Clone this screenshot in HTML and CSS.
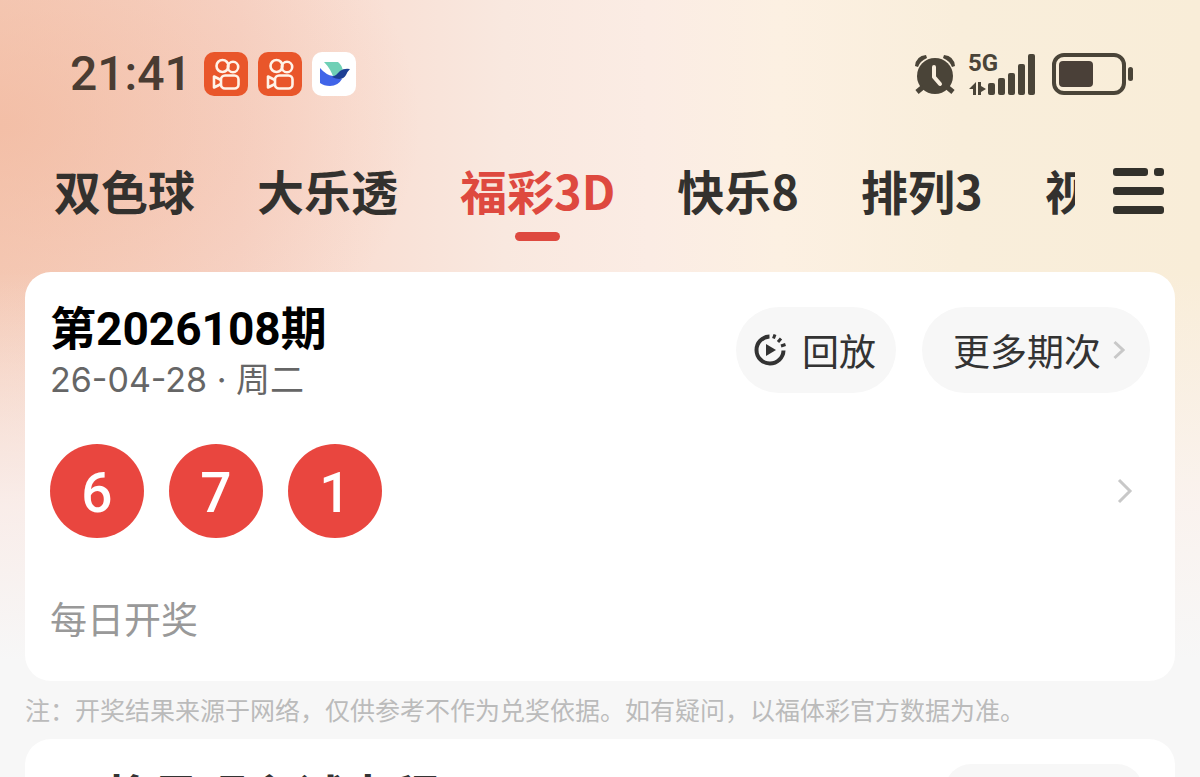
FILE: index.html
```
<!DOCTYPE html>
<html lang="zh-CN">
<head>
    <meta charset="UTF-8">
    <meta name="viewport" content="width=device-width, initial-scale=1.0">
    <title>福彩3D开奖</title>
    <link rel="stylesheet" href="styles.css">
</head>
<body>

    <svg class="defs" width="0" height="0" aria-hidden="true">
        <symbol id="camera" viewBox="0 0 44 44">
            <rect width="44" height="44" rx="10" fill="#e9562a"/>
            <g fill="none" stroke="#fff3e8" stroke-width="2.6" stroke-linejoin="round">
                <circle cx="18.500" cy="14" r="6"/>
                <circle cx="29" cy="15" r="5.200"/>
                <rect x="17" y="23.500" width="17.500" height="13" rx="4"/>
                <path d="M17 28l-7-3.500v11l7-3.500"/>
            </g>
        </symbol>
    </svg>

    <header class="status-bar">
        <span class="time">21:41</span>
        <svg class="app-icon" viewBox="0 0 44 44"><use href="#camera"/></svg>
        <svg class="app-icon" viewBox="0 0 44 44"><use href="#camera"/></svg>
        <svg class="app-icon" viewBox="0 0 44 44">
            <rect width="44" height="44" rx="10" fill="#fff"/>
            <path d="M12 10h14q4 3 5 9-4 1-9 8Q19 17 12 10z" fill="#6fd0b6"/>
            <path d="M8 16q6 7 13 8l9 3q-4 7-12 7-6 0-10-3z" fill="#4064e8"/>
            <path d="M20 25q5-2 8-6 4-3 10-2-3 3-4 6-4 7-14 2z" fill="#1d3f94"/>
        </svg>

        <div class="status-right">
            <svg class="alarm" viewBox="0 0 42 42" fill="#4a4438">
                <path d="M1 13Q2 3 12 2l1 3Q6 8 4 14zM41 13Q40 3 30 2l-1 3q7 3 9 9z"/>
                <circle cx="21" cy="23" r="18"/>
                <path d="M9 34l-6 5M33 34l6 5" stroke="#4a4438" stroke-width="5"/>
                <path d="M20 14v10l6 7" fill="none" stroke="#f9eedd" stroke-width="4" stroke-linecap="round" stroke-linejoin="round"/>
            </svg>
            <div class="signal">
                <span class="network">5G</span>
                <svg class="bars" viewBox="0 0 68 42" fill="#4a4438">
                    <rect x="20" y="30" width="7" height="12" rx="2"/>
                    <rect x="30" y="25" width="7" height="17" rx="2"/>
                    <rect x="40" y="20" width="7" height="22" rx="2"/>
                    <rect x="50" y="11" width="7" height="31" rx="2"/>
                    <rect x="60" y="1" width="7" height="41" rx="2"/>
                    <path d="M8 29v13H5v-6H1zM10 29h3v4l5 3-5 3v3h-3z"/>
                </svg>
            </div>
            <svg class="battery" viewBox="0 0 82 42">
                <rect x="2" y="2" width="70" height="38" rx="10" fill="none" stroke="#4a4438" stroke-width="4"/>
                <rect x="7" y="8" width="34" height="26" rx="4" fill="#4a4038"/>
                <rect x="76" y="14" width="5" height="14" rx="2.500" fill="#4a4438"/>
            </svg>
        </div>
    </header>

    <nav class="nav">
        <div class="tabs">
            <a href="#" class="tab">双色球</a>
            <a href="#" class="tab">大乐透</a>
            <a href="#" class="tab active">福彩3D</a>
            <a href="#" class="tab">快乐8</a>
            <a href="#" class="tab">排列3</a>
            <a href="#" class="tab">视频</a>
        </div>
        <button type="button" class="menu" aria-label="全部彩种">
            <svg viewBox="0 0 52 46" fill="#33312b">
                <rect x="0" y="0" width="35" height="8" rx="3"/>
                <rect x="41" y="0" width="10" height="8" rx="3"/>
                <rect x="0" y="19" width="51" height="8" rx="3"/>
                <rect x="0" y="38" width="51" height="8" rx="3"/>
            </svg>
        </button>
    </nav>

    <main class="content">
        <section class="card">
            <div class="card-head">
                <div>
                    <h1 class="title">第2026108期</h1>
                    <p class="date">26-04-28 · 周二</p>
                </div>
                <div class="actions">
                    <button type="button" class="pill replay">
                        <svg class="replay-icon" viewBox="0 0 32 32">
                            <path d="M15.500 2.500A13.500 13.500 0 1 0 29.500 16.500" fill="none" stroke="#333" stroke-width="4"/>
                            <path d="M19.500 4.500l1.500-4M24 8l3-3.500M27 12l4.500-1.500" stroke="#333" stroke-width="3"/>
                            <path d="M12 10v12l10-6z" fill="#333"/>
                        </svg>
                        回放
                    </button>
                    <button type="button" class="pill more">
                        更多期次
                        <svg class="arrow-small" viewBox="0 0 12 20"><path d="M1.500 2l8.500 8-8.500 8"/></svg>
                    </button>
                </div>
            </div>

            <a href="#" class="result" aria-label="开奖详情">
                <span class="ball">6</span>
                <span class="ball">7</span>
                <span class="ball">1</span>
                <svg class="arrow" viewBox="0 0 16 26"><path d="M2 2l11 11-11 11"/></svg>
            </a>

            <p class="schedule">每日开奖</p>
        </section>

        <p class="note">注：开奖结果来源于网络，仅供参考不作为兑奖依据。如有疑问，以福体彩官方数据为准。</p>

        <section class="card next">
            <h2 class="title">将号现主试走程</h2>
            <button type="button" class="pill watch">查看</button>
        </section>
    </main>

</body>
</html>
```
FILE: styles.css
```
* {
    box-sizing: border-box;
}

body {
    margin: 0;
    height: 100vh;
    overflow: hidden;
    font-family: Roboto, "Noto Sans CJK SC", sans-serif;
    color: #333;
    background:
        linear-gradient(to bottom, rgba(247, 247, 247, 0) 35%, rgba(250, 244, 244, 0.8) 65%, #f7f7f7 85%),
        radial-gradient(ellipse 420px 300px at 0 125px, rgba(242, 180, 152, 0.6), rgba(242, 180, 152, 0)),
        linear-gradient(to right, #f5cfbd 0%, #f7d6ca 20%, #f9dfd4 30%, #f9e8df 42%, #fbece4 54%, #fcf0e2 65%, #f9eedb 80%, #f9edd8 100%);
}

h1,
h2,
p {
    margin: 0;
}

button {
    border: none;
    padding: 0;
    font-family: inherit;
    color: inherit;
    cursor: pointer;
}

a {
    color: inherit;
    text-decoration: none;
}

svg {
    display: block;
    flex-shrink: 0;
}

.defs {
    position: absolute;
}

/* status bar */
.status-bar {
    display: flex;
    align-items: center;
    gap: 10px;
    padding: 52px 66px 0 70px;
}

.time {
    font-size: 48px;
    font-weight: 500;
    line-height: 44px;
    color: #4a3c32;
    margin-right: 2px;
}

.app-icon {
    width: 44px;
    height: 44px;
}

.status-right {
    display: flex;
    align-items: center;
    gap: 12px;
    margin-left: auto;
}

.alarm {
    width: 42px;
    height: 42px;
}

.signal {
    display: grid;
    margin-right: 4px;
}

.network,
.bars {
    grid-area: 1 / 1;
}

.network {
    font-family: Roboto, sans-serif;
    font-size: 24px;
    font-weight: 700;
    line-height: 20px;
    color: #4a4438;
}

.bars {
    width: 68px;
    height: 42px;
}

.battery {
    width: 82px;
    height: 42px;
}

/* lottery tabs */
.nav {
    display: flex;
    align-items: flex-start;
    gap: 38px;
    padding: 64px 35px 0 54px;
}

.tabs {
    display: flex;
    flex: 1;
    gap: 62px;
    min-width: 0;
    height: 112px;
    overflow: hidden;
}

.tab {
    display: flex;
    flex-direction: column;
    align-items: center;
    flex-shrink: 0;
    font-family: "Noto Sans CJK SC", sans-serif;
    font-size: 47px;
    font-weight: 700;
    line-height: 60px;
    color: #33312e;
}

.tab.active {
    color: #de493f;
}

.tab.active::after {
    content: "";
    width: 45px;
    height: 9px;
    margin-top: 12px;
    border-radius: 5px;
    background-color: #de493f;
}

.menu {
    margin-top: 8px;
    background: none;
}

.menu svg {
    width: 52px;
    height: 46px;
}

/* result card */
.content {
    padding: 0 25px;
}

.card {
    padding: 29px 25px 36px;
    border-radius: 26px;
    background-color: #fff;
}

.card-head {
    display: flex;
    justify-content: space-between;
}

.title {
    font-size: 46px;
    font-weight: 700;
    line-height: 56px;
    color: #000;
}

.date {
    font-family: Inter, "Noto Sans CJK SC", sans-serif;
    font-size: 34px;
    line-height: 46px;
    color: #666;
}

.actions {
    display: flex;
    gap: 26px;
    margin-top: 6px;
}

.pill {
    display: flex;
    align-items: center;
    height: 86px;
    border-radius: 43px;
    font-size: 37px;
    background-color: #f7f7f7;
}

.replay {
    gap: 16px;
    padding: 0 20px 0 18px;
}

.replay-icon {
    width: 32px;
    height: 32px;
}

.more {
    gap: 12px;
    padding: 0 25px 0 31px;
}

.arrow,
.arrow-small {
    fill: none;
    stroke: #c8c8c8;
    stroke-width: 3;
}

.arrow-small {
    width: 12px;
    height: 20px;
}

.result {
    display: flex;
    align-items: center;
    gap: 25px;
    margin-top: 41px;
}

.ball {
    width: 94px;
    height: 94px;
    border-radius: 50%;
    font-size: 55px;
    font-weight: 500;
    line-height: 98px;
    text-align: center;
    color: #fff;
    background-color: #e9463f;
}

.arrow {
    width: 16px;
    height: 26px;
    margin-left: auto;
    margin-right: 17px;
}

.schedule {
    margin-top: 59px;
    font-size: 37px;
    line-height: 50px;
    color: #999;
}

.card:first-child {
    padding-bottom: 34px;
}

.note {
    padding: 8px 0 10px;
    font-family: "Noto Sans CJK SC", sans-serif;
    font-size: 25px;
    line-height: 40px;
    color: #bbb;
}

.next {
    display: flex;
    justify-content: space-between;
    align-items: flex-start;
    padding: 25px 32px 36px 79px;
}

.next .title {
    padding-top: 7px;
    font-size: 48px;
    color: #333;
}

.watch {
    justify-content: center;
    width: 198px;
    border-radius: 26px;
}
```
